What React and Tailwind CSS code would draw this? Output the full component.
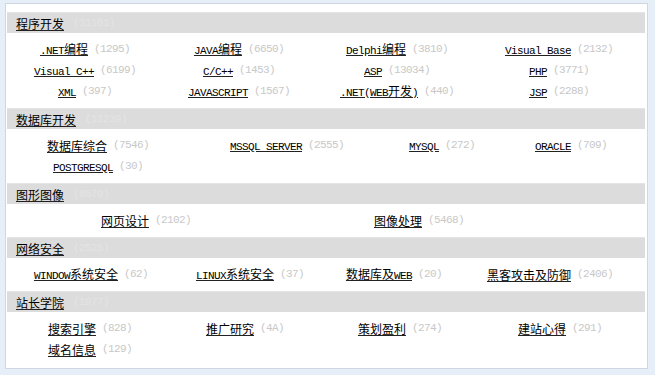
import React from "react";

const sections = [
  {
    title: "程序开发",
    total: "(31161)",
    cols: "grid-cols-[156px_152px_164px_160px]",
    items: [
      [".NET编程", "1295"],
      ["JAVA编程", "6650"],
      ["Delphi编程", "3810"],
      ["Visual Base", "2132"],
      ["Visual C++", "6199"],
      ["C/C++", "1453"],
      ["ASP", "13034"],
      ["PHP", "3771"],
      ["XML", "397"],
      ["JAVASCRIPT", "1567"],
      [".NET(WEB开发)", "440"],
      ["JSP", "2288"],
    ],
  },
  {
    title: "数据库开发",
    total: "(11239)",
    cols: "grid-cols-[182px_196px_114px_144px]",
    items: [
      ["数据库综合", "7546"],
      ["MSSQL SERVER", "2555"],
      ["MYSQL", "272"],
      ["ORACLE", "709"],
      ["POSTGRESQL", "30"],
    ],
  },
  {
    title: "图形图像",
    total: "(8570)",
    cols: "grid-cols-[278px_268px]",
    items: [
      ["网页设计", "2102"],
      ["图像处理", "5468"],
    ],
  },
  {
    title: "网络安全",
    total: "(2525)",
    cols: "grid-cols-[168px_150px_138px_174px]",
    items: [
      ["WINDOW系统安全", "62"],
      ["LINUX系统安全", "37"],
      ["数据库及WEB", "20"],
      ["黑客攻击及防御", "2406"],
    ],
  },
  {
    title: "站长学院",
    total: "(1977)",
    cols: "grid-cols-[166px_144px_166px_154px]",
    items: [
      ["搜索引擎", "828"],
      ["推广研究", "4A"],
      ["策划盈利", "274"],
      ["建站心得", "291"],
      ["域名信息", "129"],
    ],
  },
];

// ascii runs get a narrow mono face, like the half-width glyphs in the shot
const Mixed = ({ text }) =>
  text.split(/([\x00-\x7f]+)/).filter(Boolean).map((part, i) =>
    /^[\x00-\x7f]+$/.test(part) ? (
      <span key={i} className="font-['Liberation_Mono',monospace] text-[11px] tracking-[-0.6px]">
        {part}
      </span>
    ) : (
      <span key={i} className="font-['Noto_Sans_CJK_SC',sans-serif] text-[12px]">
        {part}
      </span>
    )
  );

const Section = ({ title, total, cols, items }) => (
  <div>
    <div className="h-[21px] bg-[#dcdcdc] border-t border-[#e4e4e4] pl-[9px] flex items-center text-[12px] leading-[21px]">
      <a className="underline text-black font-['Noto_Sans_CJK_SC',sans-serif] decoration-[#222]">
        {title}
      </a>
      <span className="ml-[9px] text-[#e4e4e4] font-['Liberation_Mono',monospace] text-[11px] tracking-[-0.6px]">
        {total}
      </span>
    </div>
    <div className={`grid ${cols} pt-[6px] pb-[6px]`}>
      {items.map(([name, n]) => (
        <div key={name} className="h-[21px] leading-[21px] flex justify-center items-center whitespace-nowrap">
          <a className="underline text-black decoration-[#222]">
            <Mixed text={name} />
          </a>
          <span className="ml-[6px] text-[#c8c8c8] font-['Liberation_Mono',monospace] text-[11px] tracking-[-0.6px]">
            ({n})
          </span>
        </div>
      ))}
    </div>
  </div>
);

export default function App() {
  return (
    <div className="w-[655px] h-[375px] bg-[#e6eff8] pt-[3px] pl-[5px] overflow-hidden">
      <div className="w-[643px] h-[366px] bg-white border border-[#cfd8e2] pt-[8px] px-[1px] overflow-hidden">
        <div className="w-[638px]">
          {sections.map((s) => (
            <Section key={s.title} {...s} />
          ))}
        </div>
      </div>
    </div>
  );
}
